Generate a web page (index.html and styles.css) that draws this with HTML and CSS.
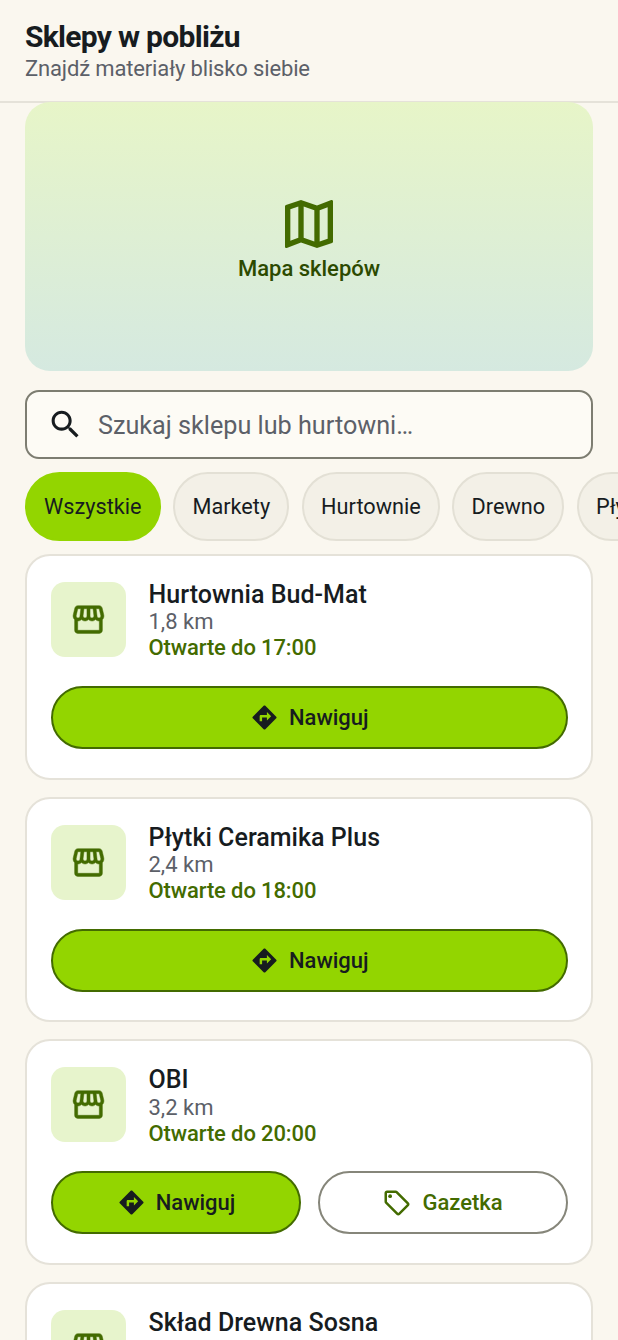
FILE: index.html
```html
<!DOCTYPE html>
<html lang="pl">
<head>
<meta charset="utf-8">
<title>Sklepy w pobliżu</title>
<link rel="stylesheet" href="styles.css">
</head>
<body>
<svg class="defs" width="0" height="0" aria-hidden="true">
  <symbol id="store" viewBox="0 0 24 24"><path d="M21.9 8.89l-1.05-4.37c-.22-.9-1-1.52-1.91-1.52H5.05c-.9 0-1.69.63-1.9 1.52L2.1 8.89c-.24 1.02-.02 2.06.62 2.88.08.11.19.19.28.29V19c0 1.1.9 2 2 2h14c1.1 0 2-.9 2-2v-6.94c.09-.09.2-.18.28-.28.64-.82.87-1.87.62-2.89zm-2.99-3.9l1.05 4.37c.1.42.01.84-.25 1.17-.14.18-.44.47-.94.47-.61 0-1.14-.49-1.21-1.14L16.98 5l1.93-.01zM13 5h1.96l.54 4.52c.05.39-.07.78-.33 1.07-.22.26-.54.41-.95.41-.67 0-1.22-.59-1.22-1.31V5zM8.49 9.52L9.04 5H11v4.69c0 .72-.55 1.31-1.29 1.31-.34 0-.65-.15-.89-.41-.25-.29-.37-.68-.33-1.07zm-4.45-.16L5.05 5h1.97l-.58 4.86c-.08.65-.6 1.14-1.21 1.14-.49 0-.8-.29-.93-.47-.27-.32-.36-.75-.26-1.17zM5 19v-6.03c.08.01.15.03.23.03.87 0 1.66-.36 2.24-.95.6.6 1.4.95 2.31.95.87 0 1.65-.36 2.23-.93.59.57 1.39.93 2.29.93.84 0 1.64-.35 2.24-.95.58.59 1.37.95 2.24.95.08 0 .15-.02.23-.03V19H5z"/></symbol>
  <symbol id="nav" viewBox="0 0 24 24"><path d="M21.71 11.29l-9-9c-.39-.39-1.02-.39-1.41 0l-9 9c-.39.39-.39 1.02 0 1.41l9 9c.39.39 1.02.39 1.41 0l9-9c.39-.38.39-1.01 0-1.41zM14 14.5V12h-4v3H8v-4c0-.55.45-1 1-1h5V7.5l3.5 3.5-3.5 3.5z"/></symbol>
  <symbol id="tag" viewBox="0 0 24 24"><path d="M21.41 11.58l-9-9C12.05 2.22 11.55 2 11 2H4c-1.1 0-2 .9-2 2v7c0 .55.22 1.05.59 1.42l9 9c.36.36.86.58 1.41.58.55 0 1.05-.22 1.41-.59l7-7c.37-.36.59-.86.59-1.41 0-.55-.23-1.06-.59-1.42zM13 20.01L4 11V4h7v-.01l9 8.99-7 7.02z"/><circle cx="6.5" cy="6.5" r="1.5"/></symbol>
</svg>
<header class="top">
  <h1 class="title">Sklepy w pobliżu</h1>
  <p class="subtitle">Znajdź materiały blisko siebie</p>
</header>
<main class="content">
  <section class="map">
    <svg class="map-icon" viewBox="0 0 24 24"><path d="M20.5 3l-.16.03L15 5.1 9 3 3.36 4.9c-.21.07-.36.25-.36.48V20.5c0 .28.22.5.5.5l.16-.03L9 18.9l6 2.1 5.64-1.9c.21-.07.36-.25.36-.48V3.5c0-.28-.22-.5-.5-.5zM10 5.47l4 1.4v11.66l-4-1.4V5.47zm-5 .99l3-1.01v11.7l-3 1.16V6.46zm14 11.08l-3 1.01V6.86l3-1.16v11.84z"/></svg>
    <span class="map-label">Mapa sklepów</span>
  </section>
  <div class="search">
    <svg class="search-icon" viewBox="0 0 24 24"><path d="M15.5 14h-.79l-.28-.27C15.41 12.59 16 11.11 16 9.5 16 5.91 13.09 3 9.5 3S3 5.91 3 9.5 5.91 16 9.5 16c1.61 0 3.09-.59 4.23-1.57l.27.28v.79l5 4.99L20.49 19l-4.99-5zm-6 0C7.01 14 5 11.99 5 9.5S7.01 5 9.5 5 14 7.01 14 9.5 11.99 14 9.5 14z"/></svg>
    <span class="search-text">Szukaj sklepu lub hurtowni…</span>
  </div>
  <nav class="chips">
    <span class="chip chip-active">Wszystkie</span>
    <span class="chip">Markety</span>
    <span class="chip">Hurtownie</span>
    <span class="chip">Drewno</span>
    <span class="chip">Płytki</span>
  </nav>
  <section class="list">
    <article class="card">
      <div class="info">
        <div class="thumb"><svg class="store-icon"><use href="#store"/></svg></div>
        <div class="text">
          <h2 class="name">Hurtownia Bud-Mat</h2>
          <p class="dist">1,8 km</p>
          <p class="open">Otwarte do 17:00</p>
        </div>
      </div>
      <div class="actions">
        <button class="btn btn-primary"><svg class="nav-icon"><use href="#nav"/></svg>Nawiguj</button>
      </div>
    </article>
    <article class="card">
      <div class="info">
        <div class="thumb"><svg class="store-icon"><use href="#store"/></svg></div>
        <div class="text">
          <h2 class="name">Płytki Ceramika Plus</h2>
          <p class="dist">2,4 km</p>
          <p class="open">Otwarte do 18:00</p>
        </div>
      </div>
      <div class="actions">
        <button class="btn btn-primary"><svg class="nav-icon"><use href="#nav"/></svg>Nawiguj</button>
      </div>
    </article>
    <article class="card">
      <div class="info">
        <div class="thumb"><svg class="store-icon"><use href="#store"/></svg></div>
        <div class="text">
          <h2 class="name">OBI</h2>
          <p class="dist">3,2 km</p>
          <p class="open">Otwarte do 20:00</p>
        </div>
      </div>
      <div class="actions">
        <button class="btn btn-primary"><svg class="nav-icon"><use href="#nav"/></svg>Nawiguj</button>
        <button class="btn btn-outline"><svg class="tag-icon"><use href="#tag"/></svg>Gazetka</button>
      </div>
    </article>
    <article class="card">
      <div class="info">
        <div class="thumb"><svg class="store-icon"><use href="#store"/></svg></div>
        <div class="text">
          <h2 class="name">Skład Drewna Sosna</h2>
        </div>
      </div>
    </article>
  </section>
</main>
</body>
</html>
```

FILE: styles.css
```css
* { box-sizing: border-box; }
html, body { margin: 0; height: 1340px; overflow: hidden; }
body { background: #faf7ef; font-family: Roboto, sans-serif; color: #171c1f; }
.defs { position: absolute; }
.top { height: 103px; padding: 20px 25px 0; border-bottom: 2px solid #e5e2d9; }
.title { margin: 0; font-size: 30px; line-height: 34px; font-weight: 700; letter-spacing: -0.7px; }
.subtitle { margin: 0; font-size: 22px; line-height: 30px; color: #5c6068; letter-spacing: -0.15px; }
.content { padding: 0 25px; }
.map { height: 269px; margin-top: -1px; border-radius: 25px; background: linear-gradient(180deg, #e7f5c8, #d5e9e0); display: flex; flex-direction: column; align-items: center; justify-content: center; }
.map-icon { width: 64px; height: 64px; fill: #436b00; }
.map-label { font-size: 22px; line-height: 26px; font-weight: 500; color: #2c4a00; }
.search { height: 69px; margin-top: 19px; border: 2px solid #7d7d71; border-radius: 14px; background: #fdfbf5; display: flex; align-items: center; gap: 14px; padding-left: 20px; }
.search-icon { width: 37px; height: 37px; fill: #171c1f; flex: none; }
.search-text { font-size: 25.2px; line-height: 31px; padding-top: 2px; color: #5c6068; }
.chips { display: flex; gap: 12.7px; margin-top: 13px; width: 640px; }
.chip { height: 69px; padding: 0 17.1px; border-radius: 35px; border: 2px solid #e3e0d5; background: #f3f0e7; font-size: 21.7px; display: flex; align-items: center; flex: none; }
.chip-active { background: #93d500; border-color: #93d500; }
.list { display: flex; flex-direction: column; gap: 17px; margin-top: 13px; }
.card { height: 225.67px; padding: 26px 23.5px 0 24px; background: #fff; border: 2px solid #e5e2d9; border-radius: 25px; flex: none; }
.info { display: flex; gap: 22.5px; height: 104px; }
.thumb { width: 75px; height: 75px; border-radius: 14px; background: #e7f4cc; display: flex; align-items: center; justify-content: center; flex: none; }
.store-icon { width: 37px; height: 37px; fill: #436b00; stroke: #436b00; stroke-width: 0.3; }
.name { margin: 0; font-size: 25px; line-height: 26.3px; font-weight: 500; letter-spacing: 0.03px; }
.dist { margin: 0; font-size: 22px; line-height: 28px; color: #5c6068; }
.open { margin: 0; font-size: 22px; line-height: 24.6px; font-weight: 500; letter-spacing: -0.12px; color: #436b00; }
.actions { display: flex; gap: 16.5px; }
.btn { flex: 1; height: 63px; border-radius: 32px; font-family: Roboto, sans-serif; font-size: 22px; font-weight: 500; display: flex; align-items: center; justify-content: center; gap: 10px; padding: 0; }
.btn-primary { background: #93d500; border: 2px solid #436b00; color: #171c1f; }
.btn-outline { background: #fff; border: 2px solid #86867a; color: #436b00; }
.nav-icon { width: 29px; height: 29px; fill: #171c1f; }
.tag-icon { width: 30px; height: 30px; fill: #436b00; }
```
